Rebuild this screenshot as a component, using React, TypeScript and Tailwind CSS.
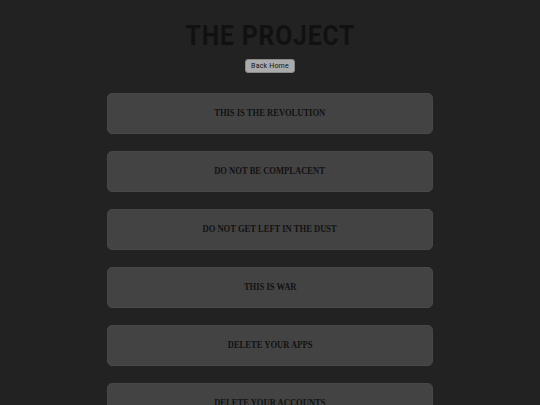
import React from "react";

const items = [
  "THIS IS THE REVOLUTION",
  "DO NOT BE COMPLACENT",
  "DO NOT GET LEFT IN THE DUST",
  "THIS IS WAR",
  "DELETE YOUR APPS",
  "DELETE YOUR ACCOUNTS",
];

export default function App() {
  return (
    <div className="h-screen overflow-hidden w-full bg-[#222222] flex flex-col items-center pt-[19px]">
      <h1 className="shrink-0 font-['Roboto',sans-serif] font-bold text-[28px] leading-[34px] text-[#111111] tracking-[1px] scale-x-[0.88]">
        THE PROJECT
      </h1>
      <button className="shrink-0 mt-[6px] h-[14px] px-[5px] rounded-[3px] bg-[#ababab] border border-[#8a8a8a] text-[7px] leading-none text-[#111] font-['Roboto',sans-serif] tracking-[0.2px]">
        Back Home
      </button>
      <div className="mt-[20px] w-[326px] flex flex-col gap-[17px] shrink-0">
        {items.map((t) => (
          <div
            key={t}
            className="h-[41px] shrink-0 rounded-[5px] bg-[#434343] border border-[#484848] flex items-center justify-center pt-[1px]"
          >
            <span className="font-['Liberation_Serif',serif] font-bold text-[9.5px] leading-none text-[#121212] scale-x-[0.9]">
              {t}
            </span>
          </div>
        ))}
      </div>
    </div>
  );
}
